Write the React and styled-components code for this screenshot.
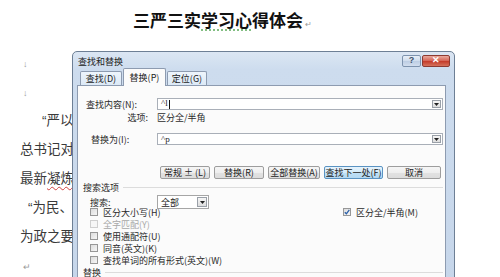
import React from "react";
import styled, { createGlobalStyle, css } from "styled-components";

const Global = createGlobalStyle`
  html, body { margin: 0; padding: 0; background: #fff; }
  body { font-family: "Liberation Sans", "Noto Sans CJK SC", sans-serif; }
`;

const Page = styled.div`
  position: relative;
  width: 500px;
  height: 277px;
  overflow: hidden;
  background: #fff;
`;

const Title = styled.h1`
  margin: 0;
  padding: 10px 0 0 133px;
  font-family: "Noto Sans CJK SC", sans-serif;
  font-size: 17px;
  line-height: 20px;
  font-weight: 700;
  color: #111;
  white-space: nowrap;
`;

const GreenMark = styled.span`
  text-decoration: underline dotted #6fb36f;
  text-underline-offset: 3px;
`;

const Mark = styled.span`
  font-size: 8px;
  font-weight: 400;
  color: #999;
  margin-left: 2px;
`;

const Doc = styled.div`
  margin-top: 14px;
  padding-left: 20px;
  width: 53px;
  overflow: hidden;
`;

const Line = styled.p`
  margin: 0;
  height: 29px;
  line-height: 29px;
  font-size: 13.5px;
  color: #3a3a3a;
  white-space: nowrap;
  overflow: hidden;
  padding-left: ${(p) => p.$indent || 0}px;
`;

const ParaMark = styled.span`
  font-size: 9px;
  color: #9a9a9a;
  padding-left: 3px;
`;

const Wavy = styled.span`
  text-decoration: underline wavy #d04040;
  text-decoration-thickness: 1px;
  text-underline-offset: 3px;
`;

/* ---------- dialog ---------- */

const Dialog = styled.div`
  position: absolute;
  left: 72px;
  top: 51px;
  width: 381px;
  height: 240px;
  border: 1px solid #6d7f95;
  border-radius: 5px 5px 0 0;
  background: linear-gradient(180deg, #dbe6f3 0px, #cddcee 18px, #c6d6ea 100%);
  font-family: "Noto Sans CJK SC", sans-serif;
  font-size: 9px;
  color: #1c1c1c;
  display: flex;
  flex-direction: column;
`;

const TitleBar = styled.div`
  height: 17px;
  display: flex;
  align-items: center;
  padding: 0 4px 0 5px;
`;

const TitleText = styled.span`
  flex: 1;
  font-size: 9px;
  color: #222;
  line-height: 1;
  padding-top: 1px;
`;

const CaptionBtn = styled.div`
  height: 10px;
  border: 1px solid ${(p) => (p.$close ? "#8c3a32" : "#7e93ae")};
  border-radius: 2px;
  display: flex;
  align-items: center;
  justify-content: center;
  font-family: "Liberation Sans", sans-serif;
  font-weight: 700;
  font-size: 9px;
  line-height: 1;
  color: ${(p) => (p.$close ? "#fff" : "#42536b")};
  width: ${(p) => (p.$close ? 26 : 17)}px;
  margin-left: ${(p) => (p.$close ? 1 : 0)}px;
  background: ${(p) =>
    p.$close
      ? "linear-gradient(180deg, #e9a99d 0%, #d6685a 45%, #c53d2c 55%, #d5725c 100%)"
      : "linear-gradient(180deg, #e8eff8 0%, #cfdcec 50%, #bccde3 51%, #d2deee 100%)"};
`;

const Body = styled.div`
  flex: 1;
  margin: 0 8px 0 4px;
  display: flex;
  flex-direction: column;
`;

const TabStrip = styled.div`
  height: 16px;
  display: flex;
  align-items: flex-end;
  padding-left: 3px;
  gap: 1px;
`;

const Tab = styled.div`
  display: flex;
  align-items: center;
  justify-content: center;
  width: ${(p) => p.$w}px;
  border: 1px solid #8d9bb0;
  border-bottom: none;
  border-radius: 2px 2px 0 0;
  line-height: 1;
  position: relative;
  ${(p) =>
    p.$active
      ? css`
          height: 17px;
          background: #fbfbfb;
          margin-bottom: -1px;
          z-index: 1;
        `
      : css`
          height: 13px;
          background: linear-gradient(180deg, #eef5fc 0%, #dce9f6 100%);
        `}
`;

const Panel = styled.div`
  flex: 1;
  background: #fbfbfb;
  border: 1px solid #8d9bb0;
  border-bottom: none;
  display: flex;
  flex-direction: column;
  padding-right: 2px;
`;

const FieldRow = styled.div`
  display: flex;
  align-items: center;
  margin-top: ${(p) => p.$mt}px;
  height: ${(p) => p.$h || 12}px;
`;

const Label = styled.span`
  width: 79px;
  box-sizing: border-box;
  padding-left: ${(p) => p.$pl || 0}px;
  text-align: ${(p) => (p.$right ? "right" : "left")};
  padding-right: ${(p) => (p.$right ? 9 : 0)}px;
  white-space: nowrap;
  line-height: 1;
  color: #2a2a2a;
`;

const Combo = styled.div`
  flex: 1;
  height: 12px;
  box-sizing: border-box;
  border: 1px solid #a9afb8;
  background: #fff;
  display: flex;
  align-items: center;
  padding: 0 1px 0 3px;
`;

const ComboText = styled.span`
  flex: 1;
  font-family: "Liberation Serif", serif;
  font-size: 9px;
  line-height: 1;
  color: #222;
`;

const Caret = styled.span`
  display: inline-block;
  width: 1px;
  height: 9px;
  background: #111;
  vertical-align: middle;
  margin-left: 1px;
`;

const ArrowBox = styled.div`
  width: 9px;
  height: 8px;
  box-sizing: border-box;
  border: 1px solid #9aa0a8;
  background: linear-gradient(180deg, #f6f6f6, #dedede);
  display: flex;
  align-items: center;
  justify-content: center;
`;

const Arrow = () => (
  <svg width="5" height="3" viewBox="0 0 5 3">
    <path d="M0 0H5L2.5 3Z" fill="#222" />
  </svg>
);

const Value = styled.span`
  line-height: 1;
  color: #2a2a2a;
`;

const ButtonRow = styled.div`
  display: flex;
  gap: 4px;
  margin-top: ${(p) => p.$mt}px;
  padding-left: 82px;
`;

const Button = styled.div`
  width: ${(p) => p.$w}px;
  height: 13px;
  box-sizing: border-box;
  border: 1px solid ${(p) => (p.$focus ? "#5a93c2" : p.$dim ? "#c8c8c8" : "#9d9d9d")};
  border-radius: 2px;
  background: ${(p) =>
    p.$focus
      ? "linear-gradient(180deg, #e6f3fc 0%, #d3ebfa 50%, #bfe0f6 51%, #b4d9f2 100%)"
      : p.$dim
      ? "linear-gradient(180deg, #f4f4f4, #ececec)"
      : "linear-gradient(180deg, #f6f6f6 0%, #eeeeee 50%, #e2e2e2 51%, #dcdcdc 100%)"};
  display: flex;
  align-items: center;
  justify-content: center;
  line-height: 1;
  white-space: nowrap;
  color: ${(p) => (p.$dim ? "#aaa" : "#222")};
`;

const GroupHeader = styled.div`
  display: flex;
  align-items: center;
  gap: 4px;
  margin-top: ${(p) => p.$mt}px;
  padding-left: 5px;
  height: 10px;
  line-height: 1;
  color: #2a2a2a;
`;

const Rule = styled.div`
  flex: 1;
  height: 1px;
  background: #dcdcdc;
`;

const SearchRow = styled.div`
  display: flex;
  align-items: center;
  margin-top: 3px;
  height: 14px;
`;

const SearchLabel = styled.span`
  width: 79px;
  padding-left: 12px;
  box-sizing: border-box;
  line-height: 1;
  color: #2a2a2a;
`;

const Select = styled.div`
  width: 52px;
  height: 14px;
  box-sizing: border-box;
  border: 1px solid #a6a6a6;
  background: #fff;
  display: flex;
  align-items: center;
  padding: 0 1px 0 3px;
`;

const SelectText = styled.span`
  flex: 1;
  line-height: 1;
`;

const SelectArrow = styled(ArrowBox)`
  width: 10px;
  height: 10px;
`;

const OptionsArea = styled.div`
  display: flex;
  margin-top: -3px;
`;

const CheckList = styled.div`
  display: flex;
  flex-direction: column;
  padding-left: 12px;
  width: 240px;
`;

const CheckRow = styled.label`
  display: flex;
  align-items: center;
  gap: 5px;
  height: 12px;
  line-height: 1;
  white-space: nowrap;
  color: ${(p) => (p.$disabled ? "#a8a8a8" : "#2a2a2a")};
`;

const Box = styled.span`
  width: 8px;
  height: 8px;
  box-sizing: border-box;
  border: 1px solid ${(p) => (p.$disabled ? "#cfcfcf" : "#979797")};
  background: ${(p) =>
    p.$disabled ? "#f6f6f6" : "linear-gradient(135deg, #dcdcdc, #f6f6f6)"};
  display: flex;
  align-items: center;
  justify-content: center;
`;

const RightCol = styled.div`
  padding-left: 13px;
`;

const Check = ({ checked, disabled, children }) => (
  <CheckRow $disabled={disabled}>
    <Box $disabled={disabled}>
      {checked && (
        <svg width="6" height="6" viewBox="0 0 6 6">
          <path d="M0.8 3.2L2.4 4.8L5.3 0.9" stroke="#2a5fa8" strokeWidth="1.3" fill="none" />
        </svg>
      )}
    </Box>
    <span>{children}</span>
  </CheckRow>
);

export default function App() {
  return (
    <Page>
      <Global />
      <Title>
        三严三实<GreenMark>学习心</GreenMark>得体会<Mark>↵</Mark>
      </Title>
      <Doc>
        <Line>
          <ParaMark>↓</ParaMark>
        </Line>
        <Line>
          <ParaMark>↓</ParaMark>
        </Line>
        <Line $indent={22}>“严以修</Line>
        <Line>总书记对各</Line>
        <Line>
          最新<Wavy>凝炼</Wavy>和
        </Line>
        <Line $indent={8}>“为民、务</Line>
        <Line>为政之要。</Line>
        <Line>
          <ParaMark>↵</ParaMark>
        </Line>
      </Doc>

      <Dialog>
        <TitleBar>
          <TitleText>查找和替换</TitleText>
          <CaptionBtn>?</CaptionBtn>
          <CaptionBtn $close>✕</CaptionBtn>
        </TitleBar>
        <Body>
          <TabStrip>
            <Tab $w={40}>查找(D)</Tab>
            <Tab $w={41} $active>
              替换(P)
            </Tab>
            <Tab $w={38}>定位(G)</Tab>
          </TabStrip>
          <Panel>
            <FieldRow $mt={12}>
              <Label $pl={8}>查找内容(N):</Label>
              <Combo>
                <ComboText>
                  ^l<Caret />
                </ComboText>
                <ArrowBox>
                  <Arrow />
                </ArrowBox>
              </Combo>
            </FieldRow>
            <FieldRow $mt={1} $h={13}>
              <Label $right>选项:</Label>
              <Value>区分全/半角</Value>
            </FieldRow>
            <FieldRow $mt={9}>
              <Label $pl={13}>替换为(I):</Label>
              <Combo>
                <ComboText>^p</ComboText>
                <ArrowBox>
                  <Arrow />
                </ArrowBox>
              </Combo>
            </FieldRow>
            <ButtonRow $mt={21}>
              <Button $w={50}>常规 ± (L)</Button>
              <Button $w={50}>替换(R)</Button>
              <Button $w={52}>全部替换(A)</Button>
              <Button $w={59} $focus>
                查找下一处(F)
              </Button>
              <Button $w={54}>取消</Button>
            </ButtonRow>
            <GroupHeader $mt={3}>
              <span>搜索选项</span>
              <Rule />
            </GroupHeader>
            <SearchRow>
              <SearchLabel>搜索:</SearchLabel>
              <Select>
                <SelectText>全部</SelectText>
                <SelectArrow>
                  <Arrow />
                </SelectArrow>
              </Select>
            </SearchRow>
            <OptionsArea>
              <CheckList>
                <Check>区分大小写(H)</Check>
                <Check disabled>全字匹配(Y)</Check>
                <Check>使用通配符(U)</Check>
                <Check>同音(英文)(K)</Check>
                <Check>查找单词的所有形式(英文)(W)</Check>
              </CheckList>
              <RightCol>
                <Check checked>区分全/半角(M)</Check>
              </RightCol>
            </OptionsArea>
            <GroupHeader $mt={1}>
              <span>替换</span>
              <Rule />
            </GroupHeader>
            <ButtonRow $mt={0}>
              <Button $w={50} />
              <Button $w={58} />
              <Button $w={66} $dim />
            </ButtonRow>
          </Panel>
        </Body>
      </Dialog>
    </Page>
  );
}
